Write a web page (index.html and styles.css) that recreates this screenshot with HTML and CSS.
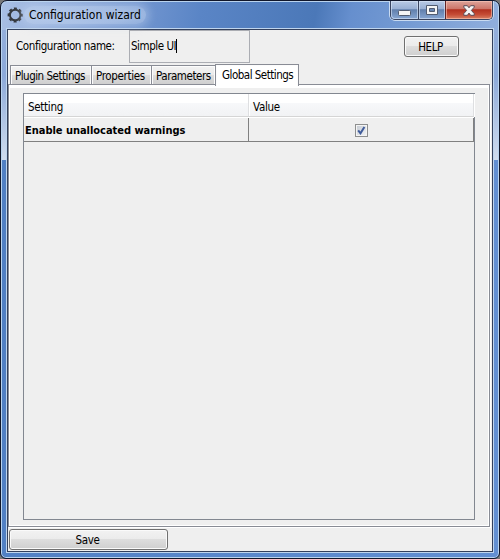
FILE: index.html
```html
<!DOCTYPE html>
<html lang="en">
<head>
<meta charset="utf-8">
<title>Configuration wizard</title>
<link rel="stylesheet" href="styles.css">
</head>
<body>
<div class="window">
  <header class="titlebar">
    <svg class="gear" width="16" height="16" viewBox="0 0 16 16">
      <circle cx="8.2" cy="8" r="5.3" fill="none" stroke="#35383d" stroke-width="2"/>
      <circle cx="8.2" cy="8" r="6.7" fill="none" stroke="#35383d" stroke-width="1.8" stroke-dasharray="3 2.262" stroke-dashoffset="1.5"/>
    </svg>
    <h1 class="title">Configuration wizard</h1>
    <div class="controls">
      <span class="control minimize"><svg width="13" height="6" viewBox="0 0 13 6"><rect x=".5" y=".5" width="12" height="5" rx="1" fill="#f5f5f5" stroke="#525c70"/></svg></span>
      <span class="control maximize"><svg width="12" height="10" viewBox="0 0 12 10"><path d="M.5.5h11v9H.5zM3.5 3.5v3h5v-3z" fill="#f5f5f5" fill-rule="evenodd" stroke="#525c70"/></svg></span>
      <span class="control close"><svg width="12" height="11" viewBox="0 0 12 11"><path d="M.8.7h3.6L6 2.8 7.6.7h3.6v1.5L8.4 5.4l2.8 3.2v1.7H7.6L6 8.1l-1.6 2.2H.8V8.6l2.8-3.2L.8 2.2z" fill="#f5f5f5" stroke="#5b4b55"/></svg></span>
    </div>
  </header>
  <main class="client">
    <div class="name-row">
      <label class="name-label" for="config-name">Configuration name:</label>
      <div class="name-field" id="config-name"><span class="name-value">Simple UI</span><span class="caret"></span></div>
      <button class="button help"><span>HELP</span></button>
    </div>
    <nav class="tabs">
      <span class="tab plugin"><span>Plugin Settings</span></span>
      <span class="tab properties"><span>Properties</span></span>
      <span class="tab parameters"><span>Parameters</span></span>
      <span class="tab active"><span>Global Settings</span></span>
    </nav>
    <section class="pane">
      <div class="table">
        <div class="row head">
          <div class="cell"><span class="setting">Setting</span></div>
          <div class="cell"><span class="value">Value</span></div>
        </div>
        <div class="row entry">
          <div class="cell"><span class="entry-name">Enable unallocated warnings</span></div>
          <div class="cell check-cell"><span class="checkbox"><svg width="9" height="9" viewBox="0 0 9 9"><path d="M1.2 4.3l2.3 3L7.4 1" fill="none" stroke="#405c9b" stroke-width="2"/></svg></span></div>
        </div>
      </div>
    </section>
    <footer class="footer"><button class="button save"><span>Save</span></button></footer>
  </main>
</div>
</body>
</html>
```
FILE: styles.css
```css
* { box-sizing: border-box; }
body {
  margin: 0;
  width: 500px;
  height: 559px;
  overflow: hidden;
  background: #777;
  color: #000;
  font: 11.5px/14px "DejaVu Sans Condensed", "DejaVu Sans", sans-serif;
  font-stretch: condensed;
  letter-spacing: -.45px;
}
span { white-space: nowrap; }
.window {
  width: 500px;
  height: 559px;
  padding: 0 5px 5px;
  border: 1px solid #10162a;
  border-radius: 7px 7px 6px 6px;
  box-shadow: inset 0 0 0 1px #b9d3ee;
  background:
    linear-gradient(100deg, #a9bfe4 0, #7598d1 26%, #5a85c6 40%, #4b78b8 63%, #668fce 70%, #759bd3 82%, #91afdd 100%) 0 0 / 100% 29px no-repeat,
    linear-gradient(#93aedb 0, #8ca9d9 35%, #d0dcee 100%) 0 29px / 100% 130px no-repeat,
    linear-gradient(90deg, #5180c4, #628fd2);
}
.titlebar {
  display: flex;
  height: 27px;
  padding-left: 1px;
}
.gear { margin: 6px 0 0; flex: none; }
.title {
  margin: 5px 0 0 1px;
  padding: 0 5px;
  width: 122px;
  height: 18px;
  border-radius: 9px;
  background: radial-gradient(ellipse, rgba(205, 221, 244, .5) 60%, rgba(205, 221, 244, .35));
  box-shadow: 0 0 9px 3px rgba(205, 221, 244, .38);
  font-size: 12px;
  line-height: 18px;
  font-weight: normal;
  letter-spacing: 0;
  white-space: nowrap;
}
.controls {
  display: flex;
  width: 103px;
  height: 19px;
  margin: 0 1px 0 auto;
  border: 1px solid #39445f;
  border-top: 0;
  border-radius: 0 0 5px 5px;
  box-shadow: 0 1px 0 #c9dbf1, 1px 0 0 #c9dbf1, -1px 0 0 #c9dbf1;
}
.control {
  display: flex;
  align-items: center;
  justify-content: center;
  width: 27px;
  box-shadow: inset 0 0 0 1px rgba(220, 232, 248, .6);
  background: linear-gradient(#b9cae5 0, #98afd3 45%, #617fac 48%, #87a6d2 100%);
}
.minimize { border-radius: 0 0 0 4px; padding-top: 6px; }
.minimize + .control { border-left: 1px solid #39445f; }
.close {
  width: 47px;
  border-left: 1px solid #602326;
  border-radius: 0 0 4px 0;
  box-shadow: inset 0 0 0 1px rgba(255, 205, 190, .55);
  background: linear-gradient(#dda39a 0, #cc7467 45%, #b1301f 48%, #c54c35 75%, #d78064 100%);
}
.client {
  display: flex;
  flex-direction: column;
  width: 488px;
  height: 525px;
  border: 1px solid #bfd5ee;
  background: #efefef;
  box-shadow: inset 0 0 0 1px #33405c;
  padding: 1px;
}
.name-row { display: flex; height: 34px; flex: none; }
.name-label { width: 121px; padding: 9px 0 0 8px; white-space: nowrap; letter-spacing: -.4px; }
.name-field {
  display: flex;
  width: 121px;
  height: 33px;
  padding: 8px 0 0 1px;
  border: 1px solid #abadb3;
}
.caret { width: 1px; height: 14px; background: #000; }
.button {
  display: block;
  padding: 0;
  height: 21px;
  border: 1px solid #707070;
  border-radius: 3px;
  box-shadow: inset 0 0 0 1px #fafafa;
  background: linear-gradient(#f2f2f2 0, #ebebeb 49%, #dddddd 50%, #cfcfcf 100%);
  color: #000;
  font: inherit;
  letter-spacing: -.4px;
  text-align: center;
}
.help { width: 55px; margin: 6px 0 0 154px; }
.help span { position: relative; left: -1px; }
.tabs { display: flex; align-items: flex-end; height: 20px; flex: none; padding-left: 2px; }
.tab {
  height: 19px;
  padding: 3px 0 0 4px;
  border: 1px solid #898c95;
  border-right: 0;
  border-bottom: 0;
  box-shadow: inset 1px 1px 0 #fcfcfc, inset -1px 0 0 #fcfcfc;
  background: linear-gradient(#f2f2f2 0, #ebebeb 49%, #dddddd 50%, #cfcfcf 100%);
}
.plugin { width: 81px; letter-spacing: -.5px; }
.properties { width: 60px; letter-spacing: -.35px; }
.parameters { width: 64px; }
.active {
  z-index: 1;
  width: 84px;
  height: 22px;
  margin-bottom: -2px;
  padding: 3px 0 0 6px;
  border-right: 1px solid #898c95;
  background: #fff;
  letter-spacing: -.5px;
}
.pane {
  width: 482px;
  height: 443px;
  flex: none;
  padding: 8px 11px 3px 14px;
  border: 1px solid #898c95;
  box-shadow: inset 0 3px 0 #fff, inset 1px 0 0 #fff, inset -1px -1px 0 #fff, 1px 1px 0 #fff;
}
.table { width: 452px; height: 427px; border: 1px solid #828790; }
.row { display: grid; grid-template-columns: 225px 225px; }
.head {
  height: 24px;
  border-bottom: 1px solid #fff;
  background: linear-gradient(#fff 0, #fff 38%, #f7f8fa 40%, #f1f2f4 100%);
  letter-spacing: -.3px;
}
.head .cell {
  border-right: 1px solid #dedfe1;
  border-bottom: 1px solid #d5d5d5;
  box-shadow: 1px 0 0 #fff;
  padding: 6px 0 0 4px;
}
.entry { height: 24px; border-bottom: 1px solid #808080; }
.entry .cell { border-right: 1px solid #808080; padding: 5px 0 0 1px; }
.entry-name { font-size: 11px; font-weight: bold; letter-spacing: -.03px; }
.entry .check-cell { display: flex; justify-content: center; padding: 6px 0 0 1px; }
.checkbox {
  display: flex;
  width: 13px;
  height: 13px;
  padding: 1px;
  border: 1px solid #8e8f8f;
  box-shadow: inset 0 0 0 1px #f4f4f4;
  background: linear-gradient(135deg, #c3c9d1, #f5f6f8);
}
.footer { padding: 2px 0 0 1px; }
.save { width: 159px; }
.save span { position: relative; left: -1px; }
```
